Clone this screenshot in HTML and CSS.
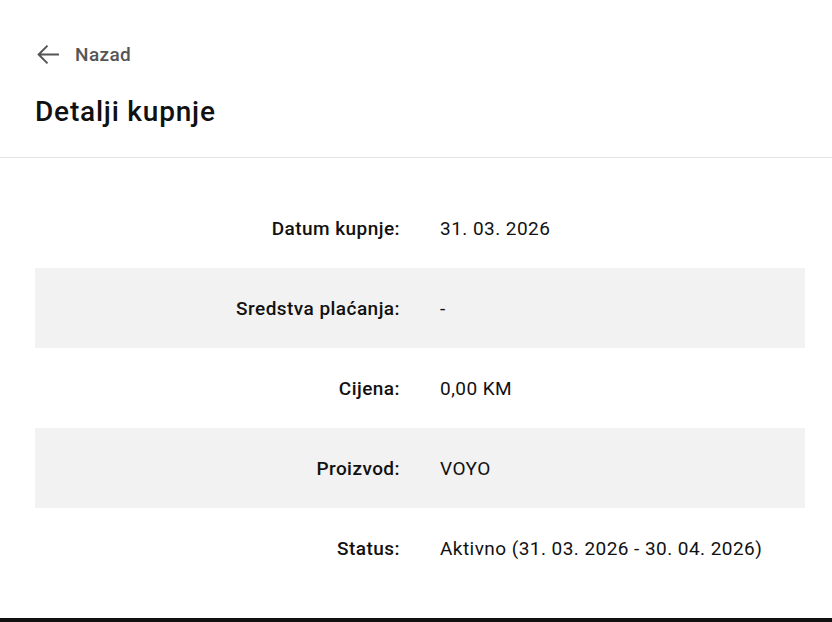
FILE: index.html
```html
<!DOCTYPE html>
<html lang="hr">
<head>
<meta charset="utf-8">
<link rel="stylesheet" href="styles.css">
</head>
<body>
<header class="head">
  <a class="back" href="#">
    <svg class="back-icon" viewBox="0 0 24 24" width="24" height="24"><path d="M23 12H3.5M12 3.5L3.5 12L12 20.5" fill="none" stroke="currentColor" stroke-width="1.9"/></svg>
    <span>Nazad</span>
  </a>
  <h1 class="title">Detalji kupnje</h1>
</header>
<main class="details">
  <div class="row"><div class="label">Datum kupnje:</div><div class="value">31. 03. 2026</div></div>
  <div class="row alt"><div class="label">Sredstva plaćanja:</div><div class="value">-</div></div>
  <div class="row"><div class="label">Cijena:</div><div class="value">0,00 KM</div></div>
  <div class="row alt"><div class="label">Proizvod:</div><div class="value">VOYO</div></div>
  <div class="row"><div class="label">Status:</div><div class="value">Aktivno (31. 03. 2026 - 30. 04. 2026)</div></div>
</main>
<footer class="foot"></footer>
</body>
</html>
```
FILE: styles.css
```css
html, body {
  margin: 0;
  padding: 0;
  background: #fff;
  font-family: Roboto, "Liberation Sans", sans-serif;
  color: #111;
}
.head {
  padding: 42px 35px 0;
  border-bottom: 1px solid #e3e3e3;
  height: 158px;
  box-sizing: border-box;
}
.back {
  display: flex;
  align-items: center;
  gap: 15px;
  color: #555;
  text-decoration: none;
  font-size: 19px;
  letter-spacing: 0.4px;
  font-weight: 500;
  height: 24px;
}
.back-icon { display: block; width: 25px; height: 25px; }
.title {
  margin: 28px 0 0;
  font-size: 28px;
  letter-spacing: 0.8px;
  font-weight: 500;
  line-height: 36px;
  color: #111;
}
.details {
  padding: 30px 27px 30px 35px;
}
.row {
  display: flex;
  align-items: center;
  height: 80px;
  font-size: 19px;
  letter-spacing: 0.45px;
}
.row.alt { background: #f2f2f2; }
.label {
  width: 365px;
  text-align: right;
  font-weight: 500;
}
.value {
  margin-left: 40px;
}
.foot {
  height: 6px;
  background: #111;
}
```
